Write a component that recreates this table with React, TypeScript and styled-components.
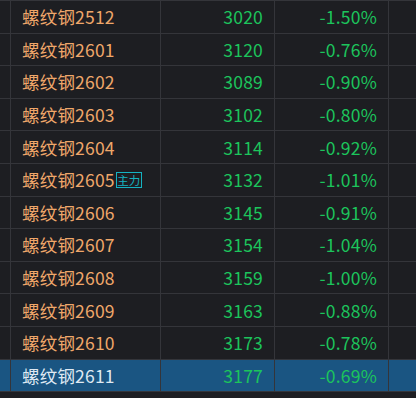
import styled, { createGlobalStyle } from "styled-components";

const GlobalStyle = createGlobalStyle`
  html, body {
    margin: 0;
    padding: 0;
    background: #1d1e22;
    overflow: hidden;
  }
`

const Table = styled.div`
  width: 416px;
  height: 398px;
  background: #1d1e22;
  border-top: 1px solid #34353a;
  font-family: "Noto Sans CJK SC", "Microsoft YaHei", sans-serif;
`

const Row = styled.div<{ selected?: boolean }>`
  display: grid;
  grid-template-columns: 11px 150px 114px 114px 1fr;
  height: 32.6px;
  box-sizing: border-box;
  border-bottom: 1px solid #34353a;
  background: ${props => props.selected ? "#1a5582" : "transparent"};
`

const Cell = styled.div<{ align?: "left" | "right" }>`
  display: flex;
  align-items: center;
  justify-content: ${props => props.align === "right" ? "flex-end" : "flex-start"};
  border-right: 1px solid #34353a;
  padding: 0 11px;
  font-size: 17.5px;
  white-space: nowrap;
  overflow: hidden;
  &:first-child {
    padding: 0;
  }
  &:last-child {
    border-right: none;
  }
`

const Name = styled.span<{ selected?: boolean }>`
  color: ${props => props.selected ? "#dfe9f2" : "#efa76a"};
  letter-spacing: 0.2px;
`

const Green = styled.span`
  color: #1cc45c;
  letter-spacing: 0.2px;
`

const Badge = styled.span`
  display: inline-flex;
  align-items: center;
  justify-content: center;
  box-sizing: border-box;
  margin-left: 1px;
  width: 26px;
  height: 16px;
  border: 1px solid #15b3c2;
  color: #15b3c2;
  font-size: 11.5px;
  line-height: 14px;
`

const rows = [
  {code: "2512", price: "3020", change: "-1.50%"},
  {code: "2601", price: "3120", change: "-0.76%"},
  {code: "2602", price: "3089", change: "-0.90%"},
  {code: "2603", price: "3102", change: "-0.80%"},
  {code: "2604", price: "3114", change: "-0.92%"},
  {code: "2605", price: "3132", change: "-1.01%", main: true},
  {code: "2606", price: "3145", change: "-0.91%"},
  {code: "2607", price: "3154", change: "-1.04%"},
  {code: "2608", price: "3159", change: "-1.00%"},
  {code: "2609", price: "3163", change: "-0.88%"},
  {code: "2610", price: "3173", change: "-0.78%"},
  {code: "2611", price: "3177", change: "-0.69%", selected: true},
]

export default function App() {
  return (
    <>
      <GlobalStyle/>
      <Table>
        {rows.map(r => (
          <Row key={r.code} selected={r.selected}>
            <Cell/>
            <Cell>
              <Name selected={r.selected}>螺纹钢{r.code}</Name>
              {r.main && <Badge>主力</Badge>}
            </Cell>
            <Cell align="right"><Green>{r.price}</Green></Cell>
            <Cell align="right"><Green>{r.change}</Green></Cell>
            <Cell/>
          </Row>
        ))}
      </Table>
    </>
  )
}
